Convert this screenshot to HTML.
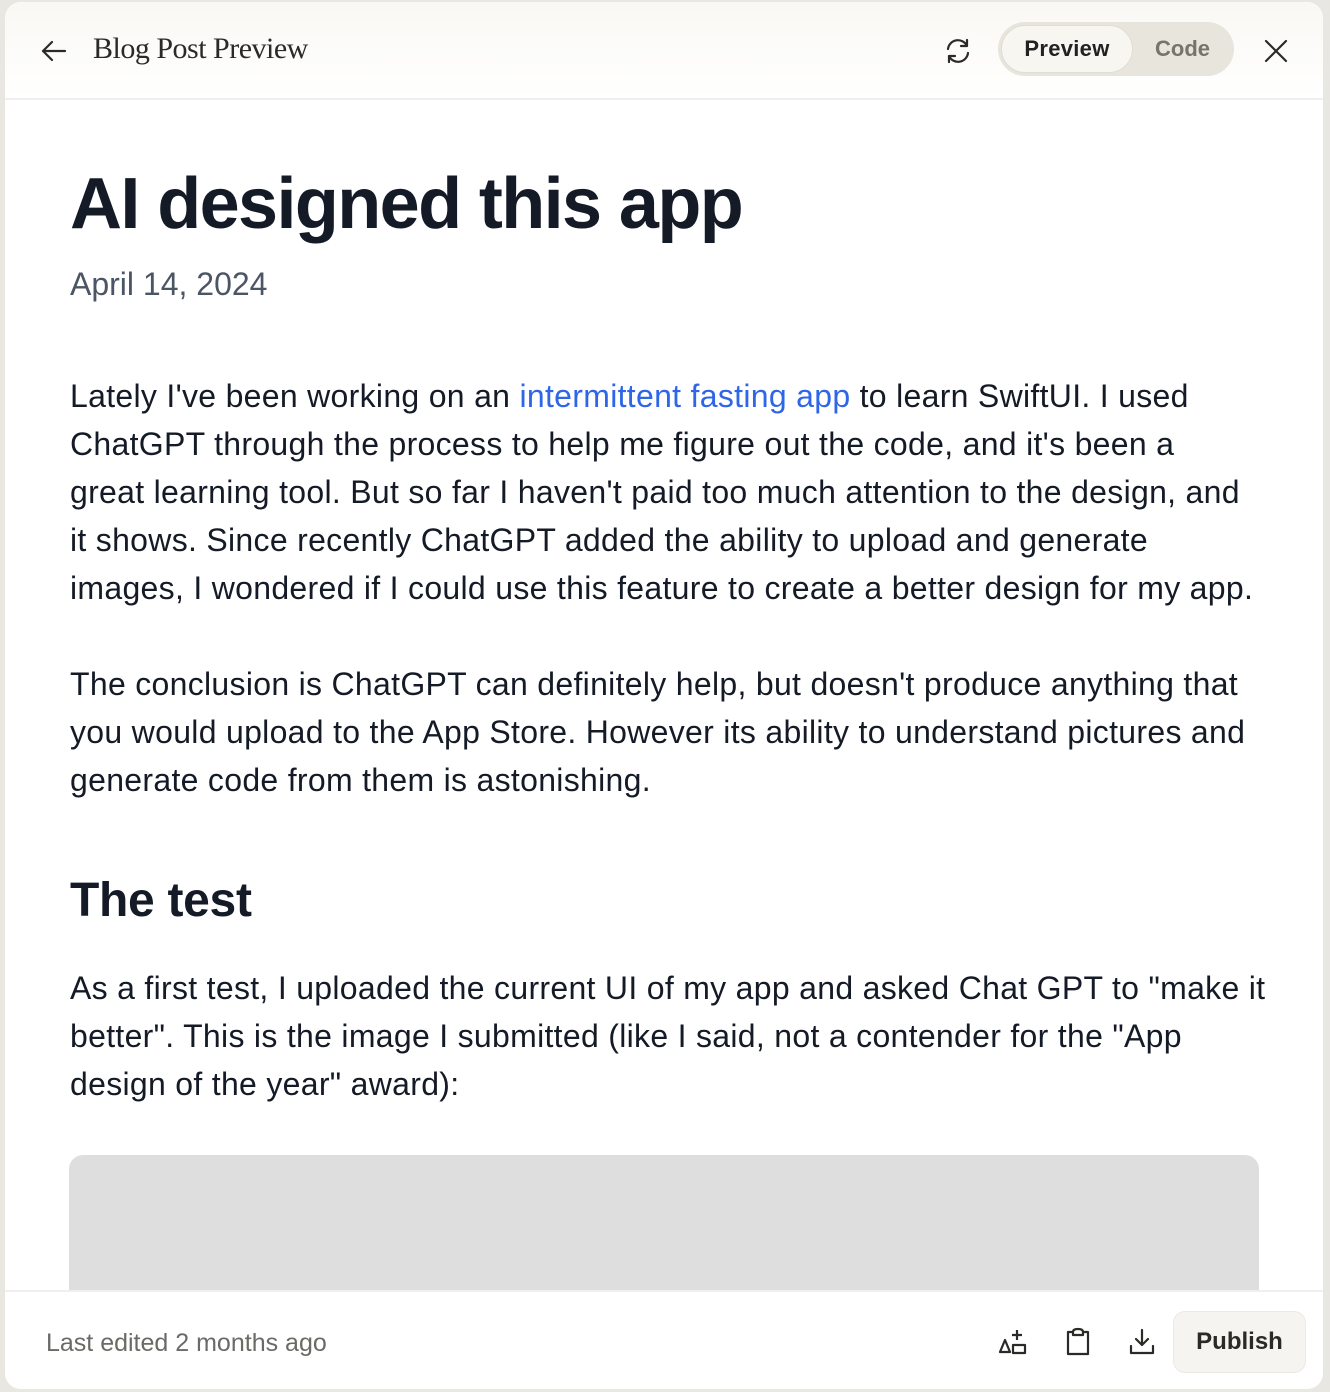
<!DOCTYPE html>
<html><head><meta charset="utf-8"><style>
html,body{margin:0;padding:0;}
body{width:1330px;height:1392px;background:#e9e7e1;position:relative;overflow:hidden;font-family:"Liberation Sans",sans-serif;}
.card{position:absolute;left:5px;top:2px;width:1318px;height:1387px;background:#fff;border-radius:16px;overflow:hidden;}
.hdr{position:absolute;left:0;top:0;width:100%;height:96px;border-bottom:2px solid #f0efeb;background:linear-gradient(#f9f8f4,#fff);}
.ttl{position:absolute;left:88px;top:30px;font-family:"Liberation Serif",serif;font-size:30px;color:#2b2a26;letter-spacing:-0.5px;}
.tog{position:absolute;left:993px;top:20px;width:236px;height:54px;border-radius:27px;background:#e8e5dc;}
.tog .p{position:absolute;left:3px;top:3px;width:132px;height:48px;border-radius:24px;background:#f7f6f1;border:1px solid #e0ddd4;box-sizing:border-box;font-weight:bold;font-size:22px;color:#222;text-align:center;line-height:46px;}
.tog .c{position:absolute;left:157px;top:0;line-height:54px;font-weight:bold;font-size:22px;color:#77746a;}
.content{position:absolute;left:65px;top:0;color:#141a26;}
h1{position:absolute;left:0;top:162px;margin:0;font-size:72px;font-weight:bold;letter-spacing:-1.6px;white-space:nowrap;line-height:80px;}
.date{position:absolute;left:0;top:264px;font-size:32px;color:#4b5563;white-space:nowrap;}
.p{font-size:32px;line-height:48px;white-space:nowrap;letter-spacing:0.3px;}
.para{position:absolute;left:0;}
a{color:#2f66e8;text-decoration:none;}
h2{position:absolute;left:0;top:869px;margin:0;font-size:48px;font-weight:bold;letter-spacing:-0.3px;white-space:nowrap;line-height:60px;}
.img{position:absolute;left:64px;top:1153px;width:1190px;height:200px;background:#dedede;border-radius:14px;}
.ftr{position:absolute;left:0;top:1288px;width:100%;height:99px;background:#fff;border-top:2px solid #f0efeb;}
.le{position:absolute;left:41px;top:37px;font-size:25px;color:#6b6a66;}
.pub{position:absolute;left:1168px;top:19px;width:133px;height:62px;border-radius:12px;background:#f5f4f1;border:1px solid #ebe9e4;box-sizing:border-box;text-align:center;line-height:60px;font-weight:bold;font-size:24px;color:#2b2a26;}
svg{position:absolute;}
</style></head><body>
<div class="card">
<div class="hdr">
<svg style="left:34px;top:34px" width="30" height="30" viewBox="0 0 30 30" fill="none" stroke="#2b2a26" stroke-width="2.2" stroke-linecap="round" stroke-linejoin="round"><path d="M26 15H4M13 6l-9 9 9 9"/></svg>
<div class="ttl">Blog Post Preview</div>
<svg style="left:938px;top:34px" width="30" height="30" viewBox="0 0 30 30" fill="none" stroke="#2b2a26" stroke-width="2.2" stroke-linecap="round" stroke-linejoin="round"><path d="M5 13a10 10 0 0 1 19-3M24 4v6h-6M25 17a10 10 0 0 1-19 3M6 26v-6h6"/></svg>
<div class="tog"><div class="p">Preview</div><div class="c">Code</div></div>
<svg style="left:1256px;top:34px" width="30" height="30" viewBox="0 0 30 30" fill="none" stroke="#2b2a26" stroke-width="2.2" stroke-linecap="round"><path d="M5 5l20 20M25 5L5 25"/></svg>
</div>
<div class="content">
<h1>AI designed this app</h1>
<div class="date">April 14, 2024</div>
<div class="para p" style="top:370px">Lately I've been working on an <a>intermittent fasting app</a> to learn SwiftUI. I used<br>ChatGPT through the process to help me figure out the code, and it's been a<br>great learning tool. But so far I haven't paid too much attention to the design, and<br>it shows. Since recently ChatGPT added the ability to upload and generate<br>images, I wondered if I could use this feature to create a better design for my app.</div>
<div class="para p" style="top:658px">The conclusion is ChatGPT can definitely help, but doesn't produce anything that<br>you would upload to the App Store. However its ability to understand pictures and<br>generate code from them is astonishing.</div>
<h2>The test</h2>
<div class="para p" style="top:962px">As a first test, I uploaded the current UI of my app and asked Chat GPT to "make it<br>better". This is the image I submitted (like I said, not a contender for the "App<br>design of the year" award):</div>
</div>
<div class="img"></div>
<div class="ftr">
<div class="le">Last edited 2 months ago</div>
<svg style="left:993px;top:35px" width="30" height="30" viewBox="0 0 30 30" fill="none" stroke="#2b2a26" stroke-width="2.2" stroke-linejoin="round"><path d="M2 25L7 13l5 12zM19 3v10M14 8h10M15 18h12v8H15z"/></svg>
<svg style="left:1058px;top:35px" width="30" height="30" viewBox="0 0 30 30" fill="none" stroke="#2b2a26" stroke-width="2.2" stroke-linejoin="round"><path d="M10 5H5v22h20V5h-5M10 5v3h10V5c0-2-2-3-5-3s-5 1-5 3z"/></svg>
<svg style="left:1122px;top:35px" width="30" height="30" viewBox="0 0 30 30" fill="none" stroke="#2b2a26" stroke-width="2.2" stroke-linecap="round" stroke-linejoin="round"><path d="M15 3v15M9 12l6 6 6-6M4 19v7h22v-7"/></svg>
<div class="pub">Publish</div>
</div>
</div>
</body></html>
